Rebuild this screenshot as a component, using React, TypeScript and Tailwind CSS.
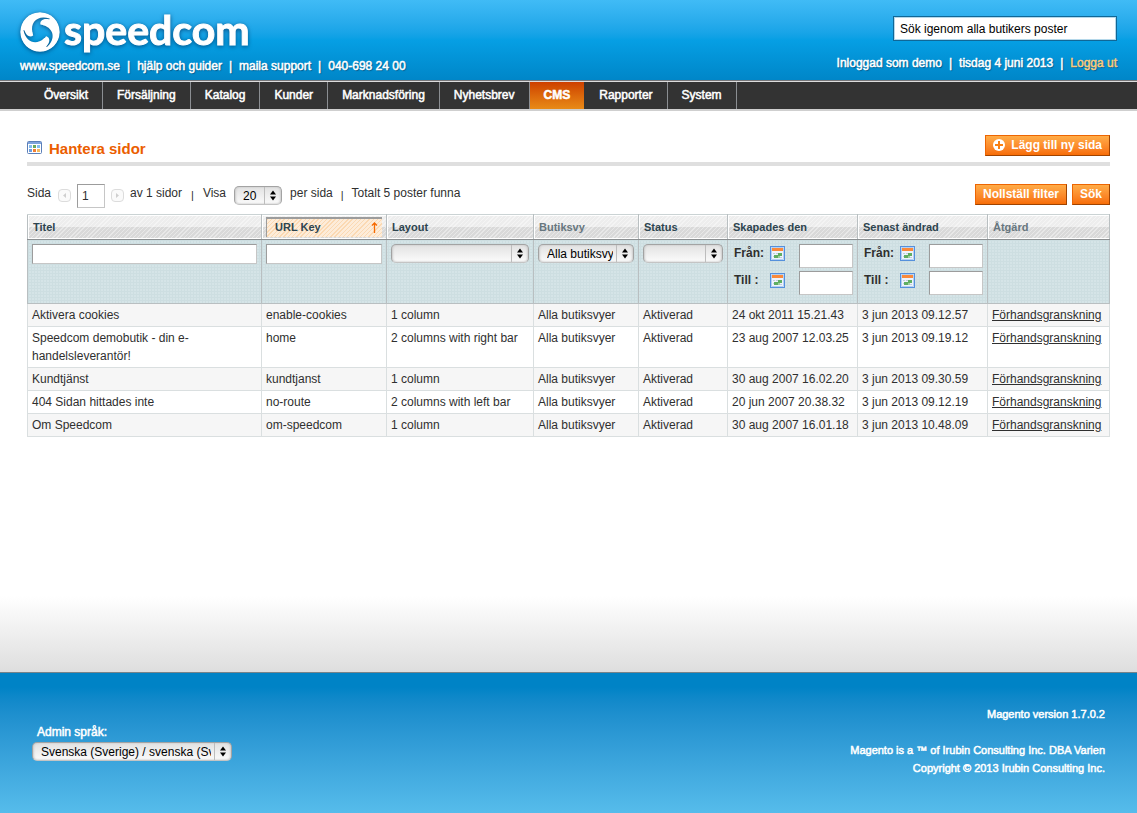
import React from 'react';

interface Page {
  title: string;
  urlKey: string;
  layout: string;
  created: string;
  updated: string;
}

const NAV = ['Översikt', 'Försäljning', 'Katalog', 'Kunder', 'Marknadsföring', 'Nyhetsbrev', 'CMS', 'Rapporter', 'System'];

const PAGES: Page[] = [
  { title: 'Aktivera cookies', urlKey: 'enable-cookies', layout: '1 column', created: '24 okt 2011 15.21.43', updated: '3 jun 2013 09.12.57' },
  { title: 'Speedcom demobutik - din e-handelsleverantör!', urlKey: 'home', layout: '2 columns with right bar', created: '23 aug 2007 12.03.25', updated: '3 jun 2013 09.19.12' },
  { title: 'Kundtjänst', urlKey: 'kundtjanst', layout: '1 column', created: '30 aug 2007 16.02.20', updated: '3 jun 2013 09.30.59' },
  { title: '404 Sidan hittades inte', urlKey: 'no-route', layout: '2 columns with left bar', created: '20 jun 2007 20.38.32', updated: '3 jun 2013 09.12.19' },
  { title: 'Om Speedcom', urlKey: 'om-speedcom', layout: '1 column', created: '30 aug 2007 16.01.18', updated: '3 jun 2013 10.48.09' },
];

// Regular weight thickened with a hairline stroke, used for white text on the coloured bars
const THICK = '[-webkit-text-stroke:0.5px_currentColor]';
const INPUT = 'border border-[#c6c6c6] border-t-[#9c9c9c] border-l-[#9c9c9c] bg-white px-1 text-xs text-[#2f2f2f] outline-none';
const HEAD_CELL =
  'h-[25px] border border-[#b9bfc1] border-t-[#cbd3d4] border-b-[#8b8f91] p-0 px-[5px] text-left text-[11px] leading-5 font-bold shadow-[inset_1px_1px_0_#fff,inset_0_-1px_0_#fff]';
const CELL = 'border border-[#dadfe0] px-1 py-[2px] leading-[18px]';
const FILTER_CELL = 'h-16 border border-[#b9bfc1] px-1 pt-1 align-top';

// One curved gap of the pinwheel, repeated three times around the centre
const ARM = 'M12.500 20C10 10 18 2.500 29.500 6.500 30 7 29.500 7.300 29 7.200 23 6 19.500 8.500 20.500 13Z';

const LogoMark = () => (
  <svg viewBox="0 0 40 40" className="h-10 w-10" aria-hidden="true">
    <mask id="swirl">
      <circle cx="20" cy="20" r="20" fill="#fff" />
      <circle cx="20" cy="20" r="7.500" fill="#000" />
      <path d={ARM} fill="#000" />
      <path d={ARM} fill="#000" transform="rotate(120 20 20)" />
      <path d={ARM} fill="#000" transform="rotate(240 20 20)" />
    </mask>
    <circle cx="20" cy="20" r="19.700" fill="#fff" mask="url(#swirl)" />
  </svg>
);

const GridIcon = () => (
  <svg viewBox="0 0 15 13" className="mt-0.5 h-[13px] w-[15px]" aria-hidden="true">
    <rect x=".5" y=".5" width="14" height="12" rx="1" fill="#fff" stroke="#5b7fb8" />
    <path d="M1 1h13v2H1Z" fill="#7ea3dc" />
    <path d="M2 4h3v3H2ZM10 4h3v3h-3Z" fill="#83bdf0" />
    <path d="M6 4h3v3H6Z" fill="#68a95f" />
    <path d="M2 8h3v3H2Z" fill="#6d9fe0" />
    <path d="M6 8h3v3H6Z" fill="#f27e32" />
    <path d="M10 8h3v3h-3Z" fill="#f5b95c" />
  </svg>
);

const CalendarIcon = () => (
  <svg viewBox="0 0 15 15" className="h-[15px] w-[15px]" aria-hidden="true">
    <rect x=".5" y=".5" width="14" height="14" fill="#fff" stroke="#5590dc" />
    <path d="M1.500 1.500h12v12h-12Z" fill="#eef3fb" stroke="#b5d0f3" />
    <path d="M2 2h11v3H2Z" fill="#fa8a3c" />
    <path d="M3 7h2v1H3ZM6 7h2v1H6ZM3 10h1v1H3ZM10 11h2v1h-2Z" fill="#c3cede" />
    <path d="M8 7h4v3H8ZM4 9h4v3H4Z" fill="#5fae62" />
    <path d="M8 10h2v2H8Z" fill="#9fd0a0" />
  </svg>
);

const PagerArrow: React.FC<{ label: string; d: string }> = ({ label, d }) => (
  <button type="button" aria-label={label} className="mt-[5px] flex h-[13px] w-[13px] items-center justify-center rounded-sm border border-[#dcdcdc] bg-[#fafafa]">
    <svg viewBox="0 0 5 5" className="h-[5px] w-[5px]" aria-hidden="true">
      <path d={d} fill="#cfcfcf" />
    </svg>
  </button>
);

// Rounded system drop-down with the double arrow
const Select: React.FC<{ label?: string; id?: string; value?: string; className?: string }> = ({ label, id, value = '', className = '' }) => (
  <div className={`relative ${className}`}>
    <select
      id={id}
      aria-label={label}
      className="block h-[19px] w-full appearance-none overflow-hidden rounded-[5px] border border-[#a3a3a3] border-b-[#c4c4c4] bg-linear-to-b from-[#e2e2e2] to-[#fbfbfb] pr-5 pl-2 text-xs leading-4 text-black shadow-[inset_1px_0_2px_#ccc,inset_-1px_0_2px_#ccc] outline-none"
    >
      <option>{value}</option>
    </select>
    <svg viewBox="0 0 18 17" className="pointer-events-none absolute top-px right-0 h-[17px] w-[18px]" aria-hidden="true">
      <path d="M.5 0v17" stroke="#bdbdbd" />
      <path d="M9 3.500l3 4H6ZM9 13.500l3-4H6Z" fill="#000" />
    </svg>
  </div>
);

const OrangeButton: React.FC<{ children: React.ReactNode }> = ({ children }) => (
  <button
    type="button"
    className="flex h-[21px] items-center border border-[#ed6502] border-r-[#a04300] border-b-[#a04300] bg-linear-to-b from-[#ffac47] to-[#f76d05] px-[7px] pb-px text-xs font-bold text-white"
  >
    {children}
  </button>
);

const DateRange: React.FC<{ name: string }> = ({ name }) => (
  <div className="space-y-[3px] pl-[2px] text-xs font-bold">
    {['Från:', 'Till :'].map((label, i) => (
      <div key={label} className="flex h-6 items-start">
        <label htmlFor={`${name}-${i}`} className="w-9 leading-[18px]">
          {label}
        </label>
        <button type="button" aria-label={`${name} ${label}`} className="mt-[2px]">
          <CalendarIcon />
        </button>
        <input id={`${name}-${i}`} className={`${INPUT} ml-auto h-6 w-[54px]`} />
      </div>
    ))}
  </div>
);

const Divider = () => <span className="px-[7px]">|</span>;

export default function App() {
  return (
    <div className="flex min-h-screen flex-col bg-white font-['Liberation_Sans',Arial,sans-serif] text-xs text-[#2f2f2f]">
      <header>
        <div className={`flex h-20 justify-between bg-linear-to-b from-[#40bbf6] via-[#069fe4] to-[#0086c8] px-5 text-white ${THICK}`}>
          <div className="flex flex-col pt-3">
            <a href="#" aria-label="speedcom" className="flex h-10 items-start drop-shadow-[0_1px_2px_rgba(0,60,110,0.8)]">
              <LogoMark />
              <span className="pl-1 font-['Lato',sans-serif] text-[41px] leading-[36px] font-bold [-webkit-text-stroke:1px_#fff]">speedcom</span>
            </a>
            <div className="flex pt-[5px] leading-[18px] [text-shadow:1px_1px_1px_#00517f]">
              <a href="#">www.speedcom.se</a>
              <Divider />
              <a href="#">hjälp och guider</a>
              <Divider />
              <a href="#">maila support</a>
              <Divider />
              <span>040-698 24 00</span>
            </div>
          </div>
          <div className="flex flex-col items-end pt-4">
            <input
              aria-label="Sök"
              defaultValue="Sök igenom alla butikers poster"
              className="h-[25px] w-56 border border-[#0f6797] bg-white px-[6px] text-xs text-black shadow-[inset_0_0_0_1px_#b5d8ea] outline-none [-webkit-text-stroke:0]"
            />
            <div className="flex pt-3 leading-[20px] [text-shadow:1px_1px_1px_#00517f]">
              <span>Inloggad som demo</span>
              <Divider />
              <span>tisdag 4 juni 2013</span>
              <Divider />
              <a href="#" className={`text-[#f9cb7c] ${THICK}`}>
                Logga ut
              </a>
            </div>
          </div>
        </div>
        <nav className={`flex h-[31px] border-t border-b-2 border-t-[#76777a] border-b-[#cfcfcf] bg-[#333] pl-[30px] text-white shadow-[inset_0_1px_0_#ddd] ${THICK}`}>
          {NAV.map((item) => (
            <a
              key={item}
              href="#"
              className={`mt-px flex items-center border-r px-[14px] pb-px ${
                item === 'CMS' ? 'border-[#333] bg-linear-to-b from-[#cd3f00] to-[#e88a17] font-bold' : 'border-[#8b8e92]'
              }`}
            >
              {item}
            </a>
          ))}
        </nav>
      </header>

      <main className="flex-1 bg-[linear-gradient(#fff,#dedede)] bg-[length:100%_76px] bg-bottom bg-no-repeat px-[27px] pt-6">
        <div className="flex h-[31px] items-start justify-between border-b-4 border-[#dfdfdf]">
          <h1 className="flex items-start gap-[7px] pt-1 text-[15px] leading-5 font-bold text-[#eb5e00]">
            <GridIcon />
            Hantera sidor
          </h1>
          <OrangeButton>
            <svg viewBox="0 0 12 12" className="mr-[6px] h-3 w-3" aria-hidden="true">
              <circle cx="6" cy="6" r="6" fill="#fff" />
              <path d="M5 2h2v3h3v2H7v3H5V7H2V5h3Z" fill="#f98014" />
            </svg>
            Lägg till ny sida
          </OrangeButton>
        </div>

        <div className="flex h-12 items-start justify-between pt-[18px]">
          <div className="flex items-start leading-[18px]">
            <label htmlFor="page" className="w-[31px]">
              Sida
            </label>
            <div className="flex items-start gap-[6px]">
              <PagerArrow label="Föregående" d="M4 0v5L1 2.500Z" />
              <input id="page" defaultValue="1" className={`${INPUT} h-6 w-7`} />
              <PagerArrow label="Nästa" d="M1 0v5l3-2.500Z" />
            </div>
            <span className="pl-[6px]">av 1 sidor</span>
            <span className="px-[9px] pt-[2px] text-[11px]">|</span>
            <label htmlFor="limit">Visa</label>
            <Select id="limit" value="20" className="mt-[2px] ml-2 w-12" />
            <span className="pl-2">per sida</span>
            <span className="px-[8px] pt-[2px] text-[11px]">|</span>
            <span>Totalt 5 poster funna</span>
          </div>
          <div className="flex gap-[5px]">
            <OrangeButton>Nollställ filter</OrangeButton>
            <OrangeButton>Sök</OrangeButton>
          </div>
        </div>

        <table className="w-full table-fixed border-collapse">
          <colgroup>
            <col />
            <col className="w-[125px]" />
            <col className="w-[147px]" />
            <col className="w-[105px]" />
            <col className="w-[89px]" />
            <col className="w-[130px]" />
            <col className="w-[130px]" />
            <col className="w-[122px]" />
          </colgroup>
          <thead>
            <tr className="bg-[repeating-linear-gradient(135deg,rgba(255,255,255,0.4)_0_1px,transparent_1px_3px),linear-gradient(#ededed_50%,#d9d9d9_50%)] text-[#2d444f]">
              <th className={HEAD_CELL}>Titel</th>
              <th className="h-[25px] border border-[#b9bfc1] border-t-[#cbd3d4] border-b-[#8b8f91] px-1 text-left text-[11px] font-bold shadow-[inset_1px_1px_0_#fff,inset_0_-1px_0_#fff]">
                <div className="flex h-5 items-center justify-between border-t-2 border-l border-[#9c9c9c] bg-[repeating-linear-gradient(135deg,#fbd9b2_0_1px,#fdecd9_1px_3px)] pr-1 pb-px pl-2">
                  URL Key
                  <svg viewBox="0 0 7 11" className="h-[11px] w-[7px]" aria-hidden="true">
                    <path d="M3.500 11V1M1 3.500L3.500 1 6 3.500" fill="none" stroke="#f76a00" strokeWidth="1.300" />
                  </svg>
                </div>
              </th>
              <th className={HEAD_CELL}>Layout</th>
              <th className={`${HEAD_CELL} text-[#67767e]`}>Butiksvy</th>
              <th className={HEAD_CELL}>Status</th>
              <th className={HEAD_CELL}>Skapades den</th>
              <th className={HEAD_CELL}>Senast ändrad</th>
              <th className={`${HEAD_CELL} text-[#67767e]`}>Åtgärd</th>
            </tr>
            <tr className="bg-[#d5e4e7] bg-[linear-gradient(#cddee1_1px,transparent_1px),linear-gradient(90deg,#cddee1_1px,transparent_1px)] bg-[length:3px_3px]">
              <td className={FILTER_CELL}>
                <input aria-label="Titel" className={`${INPUT} block h-5 w-full`} />
              </td>
              <td className={FILTER_CELL}>
                <input aria-label="URL Key" className={`${INPUT} block h-5 w-full`} />
              </td>
              <td className={FILTER_CELL}>
                <Select label="Layout" />
              </td>
              <td className={FILTER_CELL}>
                <Select label="Butiksvy" value="Alla butiksvyer" />
              </td>
              <td className={FILTER_CELL}>
                <Select label="Status" />
              </td>
              <td className={FILTER_CELL}>
                <DateRange name="created" />
              </td>
              <td className={FILTER_CELL}>
                <DateRange name="updated" />
              </td>
              <td className={FILTER_CELL} />
            </tr>
          </thead>
          <tbody>
            {PAGES.map((page) => (
              <tr key={page.urlKey} className="align-top odd:bg-[#f6f6f6]">
                <td className={`${CELL} pr-12`}>{page.title}</td>
                <td className={CELL}>{page.urlKey}</td>
                <td className={CELL}>{page.layout}</td>
                <td className={CELL}>Alla butiksvyer</td>
                <td className={CELL}>Aktiverad</td>
                <td className={`${CELL} whitespace-nowrap`}>{page.created}</td>
                <td className={`${CELL} whitespace-nowrap`}>{page.updated}</td>
                <td className={CELL}>
                  <a href="#" className="underline">
                    Förhandsgranskning
                  </a>
                </td>
              </tr>
            ))}
          </tbody>
        </table>
      </main>

      <footer className="flex h-[141px] items-start justify-between border-t border-[#75838a] bg-linear-to-b from-[#0083c6] from-10% to-[#56bceb] px-8 text-white">
        <div className="pt-[50px]">
          <label htmlFor="locale" className={`block pl-[5px] leading-[19px] ${THICK}`}>
            Admin språk:
          </label>
          <Select id="locale" value="Svenska (Sverige) / svenska (Sverige)" className="w-[200px]" />
        </div>
        <div className={`pt-8 text-right text-[11px] leading-[18px] ${THICK}`}>
          <p>Magento version 1.7.0.2</p>
          <p className="pt-[18px]">Magento is a ™ of Irubin Consulting Inc. DBA Varien</p>
          <p>Copyright © 2013 Irubin Consulting Inc.</p>
        </div>
      </footer>
    </div>
  );
}
